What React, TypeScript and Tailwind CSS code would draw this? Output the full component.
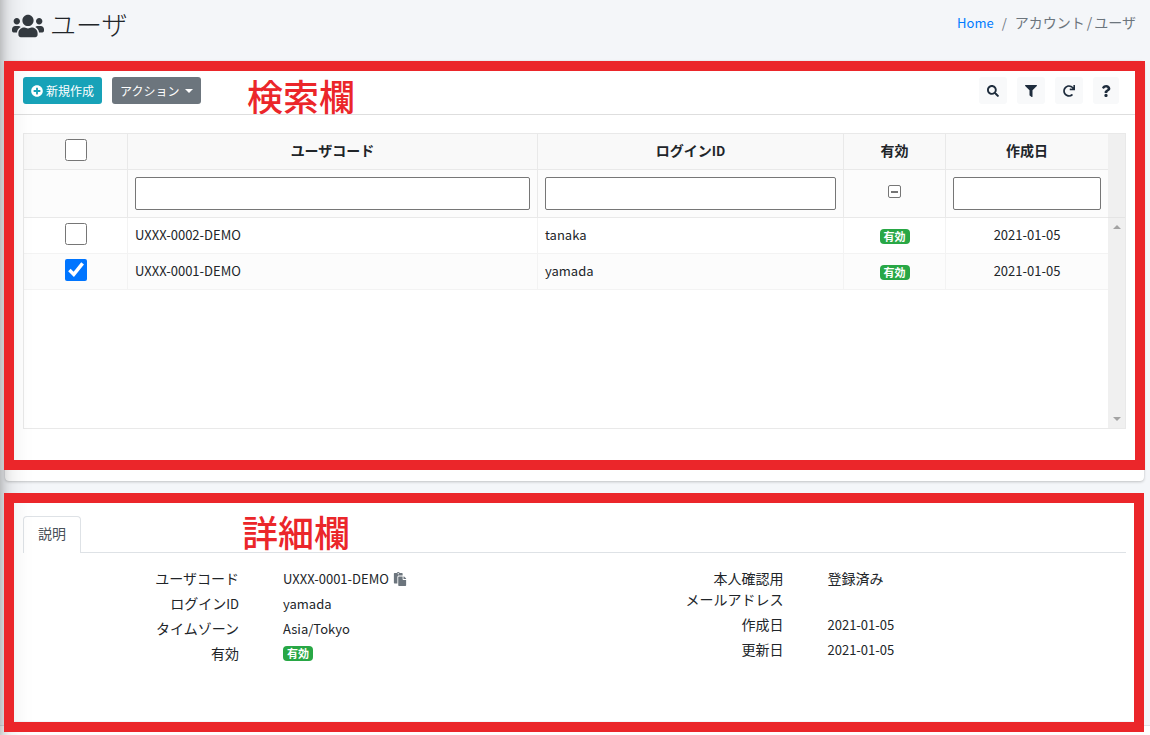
import { useState } from "react";
import {
  FaFilter,
  FaPaste,
  FaPlusCircle,
  FaQuestion,
  FaRedo,
  FaSearch,
  FaUsers,
} from "react-icons/fa";

const users = [
  { code: "UXXX-0002-DEMO", login: "tanaka", created: "2021-01-05" },
  { code: "UXXX-0001-DEMO", login: "yamada", created: "2021-01-05" },
];

export default function App() {
  const [selected, setSelected] = useState<string[]>(["UXXX-0001-DEMO"]);

  const toggle = (code: string) =>
    setSelected((prev) =>
      prev.includes(code) ? prev.filter((c) => c !== code) : [...prev, code],
    );

  const toggleAll = () =>
    setSelected(selected.length === users.length ? [] : users.map((u) => u.code));

  return (
    <div className="relative flex min-h-screen flex-col overflow-hidden bg-[#f4f6f9] font-['Noto_Sans_CJK_JP',sans-serif] text-sm leading-[21px] text-[#212529]">
      {/* Sombra da barra lateral */}
      <div className="pointer-events-none absolute -top-14 bottom-0 -left-64 z-10 w-64 shadow-[0_14px_28px_rgba(0,0,0,0.25),0_10px_10px_rgba(0,0,0,0.22)]" />

      <header className="flex h-[61px] items-start justify-between pt-1.5 pr-3.5 pl-3">
        <h1 className="flex items-center gap-1.5 text-[26px] leading-9 font-light">
          <FaUsers className="mt-1 h-8 w-8 text-[#343a40]" />
          ユーザ
        </h1>
        <nav className="flex gap-2 pt-1.5 text-[#6c757d]">
          <a href="#" className="text-[13px] text-[#007bff]">
            Home
          </a>
          <span className="text-[13px]">/</span>
          <span>
            アカウント<span className="mx-0.5">/</span>ユーザ
          </span>
        </nav>
      </header>

      <main className="mr-1.5 ml-[5px] flex flex-1 flex-col gap-4">
        <section className="relative rounded bg-white pb-[52px] shadow-[0_0_1px_rgba(0,0,0,0.13),0_1px_3px_rgba(0,0,0,0.2)]">
          <Frame className="-inset-x-px top-0 bottom-[11px]" />
          <Note className="top-3.5 left-[242px]">検索欄</Note>

          <div className="flex h-[54px] items-center justify-between border-b border-black/13 px-[18px] pt-1.5">
            <div className="flex gap-2.5">
              <button className="flex h-[27px] items-center gap-[3px] rounded-[3px] bg-[#17a2b8] px-2 text-xs text-white">
                <FaPlusCircle className="h-3 w-3" />
                新規作成
              </button>
              <button className="flex h-[27px] items-center gap-1.5 rounded-[3px] bg-[#6c757d] px-2 text-xs text-white">
                アクション
                <span className="border-x-4 border-t-4 border-x-transparent border-t-white" />
              </button>
            </div>
            <div className="flex gap-2.5 pr-[7px]">
              <IconButton label="検索">
                <FaSearch className="h-3 w-3" />
              </IconButton>
              <IconButton label="フィルタ">
                <FaFilter className="h-3 w-3" />
              </IconButton>
              <IconButton label="更新">
                <FaRedo className="h-3 w-3" />
              </IconButton>
              <IconButton label="ヘルプ">
                <FaQuestion className="h-3 w-2.5" />
              </IconButton>
            </div>
          </div>

          <div className="mx-[18px] mt-[18px] flex min-h-[296px] border border-[#e9e9e9]">
            <div className="flex-1">
              <table className="w-full table-fixed border-separate border-spacing-0">
                <colgroup>
                  <col className="w-[104px]" />
                  <col />
                  <col className="w-[306px]" />
                  <col className="w-[102px]" />
                  <col className="w-[162px]" />
                </colgroup>
                <thead>
                  <tr className="h-9 bg-[#f9f9f9] [&>th]:border-b [&>th]:border-[#e9e9e9] [&>th]:pb-0.5 [&>th:not(:last-child)]:border-r">
                    <th>
                      <RowCheck
                        label="すべて選択"
                        checked={selected.length === users.length}
                        onChange={toggleAll}
                      />
                    </th>
                    <th>ユーザコード</th>
                    <th>
                      ログイン<span className="text-[13px]">ID</span>
                    </th>
                    <th>有効</th>
                    <th>作成日</th>
                  </tr>
                  <tr className="h-12 bg-[#fcfcfc] [&>td]:border-b [&>td]:border-[#e9e9e9] [&>td]:px-[7px] [&>td:not(:last-child)]:border-r">
                    <td />
                    <td>
                      <FilterInput label="ユーザコード" />
                    </td>
                    <td>
                      <FilterInput label="ログインID" />
                    </td>
                    <td>
                      <input
                        type="checkbox"
                        aria-label="有効"
                        className="mx-auto mb-1 flex h-[13px] w-[13px] appearance-none items-center justify-center rounded-xs border border-[#767676] bg-white before:h-0.5 before:w-[7px] before:bg-[#767676]"
                      />
                    </td>
                    <td>
                      <FilterInput label="作成日" />
                    </td>
                  </tr>
                </thead>
                <tbody>
                  {users.map((user) => (
                    <tr
                      key={user.code}
                      className="h-9 text-[13px] even:bg-[#fcfcfc] [&>td]:border-b [&>td]:border-[#f3f3f3] [&>td]:px-[7px] [&>td]:pb-0.5 [&>td:not(:last-child)]:border-r"
                    >
                      <td>
                        <RowCheck
                          label={user.code}
                          checked={selected.includes(user.code)}
                          onChange={() => toggle(user.code)}
                        />
                      </td>
                      <td>{user.code}</td>
                      <td>{user.login}</td>
                      <td className="text-center">
                        <Badge />
                      </td>
                      <td className="text-center">{user.created}</td>
                    </tr>
                  ))}
                </tbody>
              </table>
            </div>

            {/* Barra de rolagem */}
            <div className="flex w-[17px] flex-col items-center bg-[#f0f0f0]">
              <div className="h-[84px] w-full border-b border-[#e4e4e4]" />
              <span className="mt-[7px] border-x-4 border-b-4 border-x-transparent border-b-[#a3a3a3]" />
              <span className="mt-auto mb-[7px] border-x-4 border-t-4 border-x-transparent border-t-[#a3a3a3]" />
            </div>
          </div>
        </section>

        <section className="relative mb-1 flex-1 rounded bg-white px-[18px] pt-[19px]">
          <Frame className="-top-1 right-0 -bottom-[11px] -left-px" />
          <Note className="top-3.5 left-[237px]">詳細欄</Note>

          <div className="flex border-b border-[#dee2e6]">
            <button className="-mb-px h-[37px] rounded-t border border-b-0 border-[#dee2e6] bg-white px-3.5 pb-1 text-[#495057]">
              説明
            </button>
          </div>

          <div className="grid grid-cols-2 pt-[15px] pr-3.5">
            <dl>
              <Field label="ユーザコード">
                <span className="text-[13px]">UXXX-0001-DEMO</span>
                <button title="コピー" className="ml-1 text-[#6c757d]">
                  <FaPaste className="h-3.5 w-3.5" />
                </button>
              </Field>
              <Field
                label={
                  <>
                    ログイン<span className="text-[13px]">ID</span>
                  </>
                }
              >
                <span className="text-[13px]">yamada</span>
              </Field>
              <Field label="タイムゾーン">
                <span className="text-[13px]">Asia/Tokyo</span>
              </Field>
              <Field label="有効">
                <Badge />
              </Field>
            </dl>
            <dl>
              <Field
                label={
                  <>
                    本人確認用
                    <br />
                    メールアドレス
                  </>
                }
              >
                登録済み
              </Field>
              <Field label="作成日">
                <span className="text-[13px]">2021-01-05</span>
              </Field>
              <Field label="更新日">
                <span className="text-[13px]">2021-01-05</span>
              </Field>
            </dl>
          </div>
        </section>
      </main>

      <footer className="h-2.5 border-t border-[#dee2e6] bg-white" />
    </div>
  );
}

// Helpers de Componente
function Frame({ className }: { className: string }) {
  return (
    <div
      className={`pointer-events-none absolute z-20 border-10 border-[#eb262a] ${className}`}
    />
  );
}

function Note({
  className,
  children,
}: {
  className: string;
  children: React.ReactNode;
}) {
  return (
    <p
      className={`pointer-events-none absolute z-20 text-4xl leading-10 font-medium text-[#eb262a] ${className}`}
    >
      {children}
    </p>
  );
}

function IconButton({
  label,
  children,
}: {
  label: string;
  children: React.ReactNode;
}) {
  return (
    <button
      title={label}
      className="flex h-[27px] items-center justify-center rounded-[3px] bg-[#f8f9fa] px-2 text-[#1f2d3d]"
    >
      {children}
    </button>
  );
}

function RowCheck({
  label,
  checked,
  onChange,
}: {
  label: string;
  checked: boolean;
  onChange: () => void;
}) {
  return (
    <input
      type="checkbox"
      aria-label={label}
      checked={checked}
      onChange={onChange}
      className="mx-auto mb-0.5 block h-[22px] w-[22px] accent-[#0075ff]"
    />
  );
}

function FilterInput({ label }: { label: string }) {
  return (
    <input
      type="text"
      aria-label={label}
      className="block h-[33px] w-full rounded-xs border border-[#767676] bg-white px-1.5 text-[13px]"
    />
  );
}

function Badge() {
  return (
    <span className="inline-block h-[15px] rounded bg-[#28a745] px-1 align-middle text-[11px] leading-[15px] font-bold text-white">
      有効
    </span>
  );
}

function Field({
  label,
  children,
}: {
  label: React.ReactNode;
  children: React.ReactNode;
}) {
  return (
    <div className="grid grid-cols-[216px_1fr] gap-11 pb-1">
      <dt className="text-right">{label}</dt>
      <dd className="flex h-[21px] items-center">{children}</dd>
    </div>
  );
}
